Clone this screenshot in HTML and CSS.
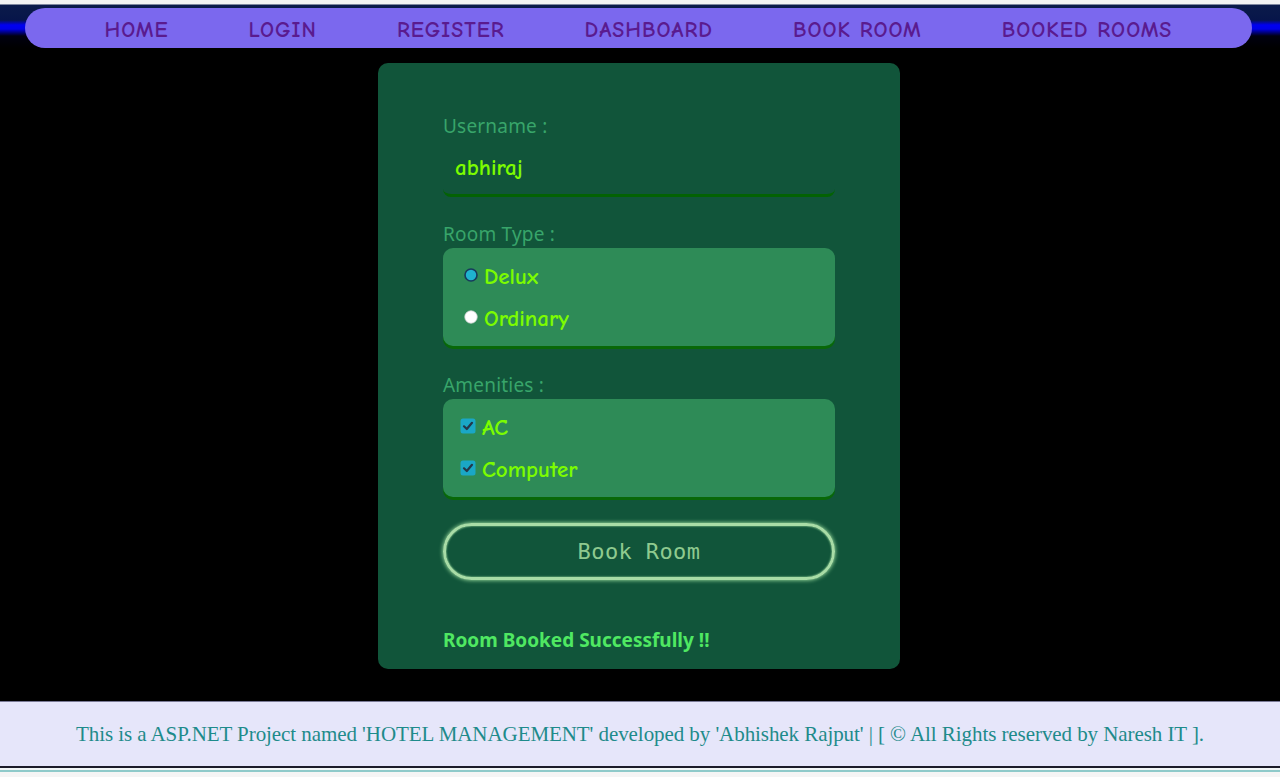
FILE: index.html
```html
<!DOCTYPE html>
<html lang="en">
<head>
<meta charset="utf-8">
<title>Book Room</title>
<link rel="stylesheet" href="styles.css">
</head>
<body>
<header class="top">
  <nav class="nav">
    <a href="#">HOME</a>
    <a href="#">LOGIN</a>
    <a href="#">REGISTER</a>
    <a href="#">DASHBOARD</a>
    <a href="#">BOOK ROOM</a>
    <a href="#">BOOKED ROOMS</a>
  </nav>
</header>
<main class="main">
  <form class="card">
    <div class="label">Username :</div>
    <div class="input">abhiraj</div>

    <div class="label">Room Type :</div>
    <div class="box">
      <div class="opt">
        <svg class="radio" width="14" height="14" viewBox="0 0 14 14"><circle cx="7" cy="7" r="6" fill="#1fb3cf" stroke="#173a5c" stroke-width="1.6"/></svg>
        <span>Delux</span>
      </div>
      <div class="opt">
        <svg class="radio" width="14" height="14" viewBox="0 0 14 14"><circle cx="7" cy="7" r="6.2" fill="#ffffff" stroke="#d8d8d8" stroke-width="0.8"/></svg>
        <span>Ordinary</span>
      </div>
    </div>

    <div class="label">Amenities :</div>
    <div class="box">
      <div class="opt">
        <svg class="check" width="16" height="16" viewBox="0 0 16 16"><rect x="0.5" y="0.5" width="15" height="15" rx="2.5" fill="#1aa7c6"/><path d="M4 8.3 L6.8 11 L12 4.8" fill="none" stroke="#24384a" stroke-width="2.2" stroke-linecap="round" stroke-linejoin="round"/></svg>
        <span>AC</span>
      </div>
      <div class="opt">
        <svg class="check" width="16" height="16" viewBox="0 0 16 16"><rect x="0.5" y="0.5" width="15" height="15" rx="2.5" fill="#1aa7c6"/><path d="M4 8.3 L6.8 11 L12 4.8" fill="none" stroke="#24384a" stroke-width="2.2" stroke-linecap="round" stroke-linejoin="round"/></svg>
        <span>Computer</span>
      </div>
    </div>

    <button type="button" class="btn">Book Room</button>

    <div class="msg">Room Booked Successfully !!</div>
  </form>
</main>
<footer class="footer">
  This is a ASP.NET Project named 'HOTEL MANAGEMENT' developed by 'Abhishek Rajput' | [ © All Rights reserved by Naresh IT ].
</footer>
<div class="bottom-line"></div>
</body>
</html>
```

FILE: styles.css
```css
html, body {
  margin: 0;
  padding: 0;
}
body {
  background: #000;
  font-family: "Noto Sans", "DejaVu Sans", sans-serif;
  height: 777px;
  overflow: hidden;
}
.top {
  height: 48px;
  background: linear-gradient(to bottom,
    #f3f3f3 0px, #f3f3f3 4px,
    #0b1b4a 5px, #07154a 20px,
    #0000f0 25px, #0000e8 29px,
    #000010 36px, #000 48px);
  display: flex;
}
.nav {
  margin: 8px 28px 0 25px;
  height: 40px;
  flex: 1;
  background: #7b68ee;
  border-radius: 20px;
  display: flex;
  align-items: center;
  justify-content: center;
  gap: 80px;
  padding: 3px 0 0 0;
  box-sizing: border-box;
}
.nav a {
  font-family: "Comic Sans MS", "Comic Neue", "Lato", sans-serif;
  font-size: 22px;
  font-weight: 700;
  color: #5a1b8f;
  text-decoration: none;
  letter-spacing: 1px;
}
.main {
  display: flex;
  justify-content: center;
  padding: 15px 0 32px;
}
.card {
  width: 392px;
  background: #11553a;
  border-radius: 10px;
  padding: 51px 65px 17px;
  margin: 0 0 0 -2px;
  display: flex;
  flex-direction: column;
}
.label {
  font-family: "Noto Sans", sans-serif;
  font-size: 19px;
  line-height: 24px;
  color: #38a56a;
  letter-spacing: 0.2px;
}
.input {
  margin-top: 12px;
  height: 44px;
  border-bottom: 3px solid #036203;
  border-radius: 0 0 8px 8px;
  padding-left: 12px;
  font-family: "Comic Sans MS", "Comic Neue", "Lato", sans-serif;
  font-size: 23px;
  font-weight: 700;
  line-height: 36px;
  color: #7cfc00;
  margin-bottom: 25px;
}
.box {
  margin-top: 2px;
  background: #2e8b57;
  border-radius: 10px;
  box-shadow: 0 3px 0 #086808;
  padding: 7px 20px;
  margin-bottom: 27px;
}
.opt {
  height: 42px;
  display: flex;
  align-items: center;
  gap: 6px;
  font-family: "Comic Sans MS", "Comic Neue", "Lato", sans-serif;
  font-size: 23px;
  font-weight: 700;
  color: #7cfc00;
}
.radio {
  margin-left: 1px;
  margin-top: -3px;
}
.check {
  margin-left: -3px;
  margin-top: -3px;
}
.btn {
  margin-top: -1px;
  height: 57px;
  border: 3px solid #a8dca6;
  border-radius: 30px;
  background: transparent;
  box-shadow: 0 0 4px #b5f5b0, inset 0 0 2px #b5f5b0;
  color: #8fca8f;
  font-family: "DejaVu Sans Mono", monospace;
  font-size: 22px;
  letter-spacing: 0.4px;
  cursor: pointer;
}
.msg {
  margin-top: 48px;
  font-family: "Noto Sans", sans-serif;
  font-weight: 700;
  font-size: 19px;
  line-height: 24px;
  color: #4fe862;
}
.footer {
  border-top: 1px solid #7a7a96;
  border-bottom: 2px solid #1c1c2a;
  background: #e6e6fa;
  height: 64px;
  display: flex;
  align-items: center;
  justify-content: center;
  font-family: "Liberation Serif", serif;
  font-size: 21px;
  letter-spacing: -0.07px;
  color: #1e8b8b;
}
.bottom-line {
  height: 10px;
  background: linear-gradient(to bottom, #f2f6f6 0px, #f2f6f6 2px, #8fcaca 2px, #8fcaca 4px, #f5f5f5 4px);
}
```
